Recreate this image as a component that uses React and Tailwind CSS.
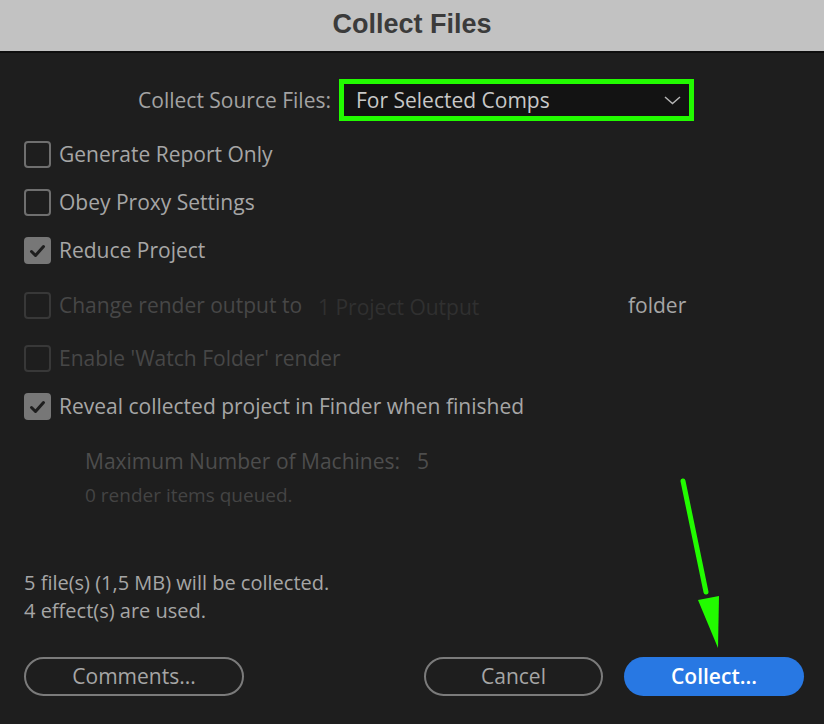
import React from "react";

const font = { fontFamily: '"Open Sans", "Noto Sans", sans-serif' };

function Check({ state }) {
  if (state === "on") {
    return (
      <div className="w-[27px] h-[27px] rounded-[4px] bg-[#777777] flex items-center justify-center shrink-0">
        <svg width="17" height="14" viewBox="0 0 17 14">
          <path d="M2.5 7.5 L6.5 11.5 L14.5 2.5" fill="none" stroke="#1e1e1e" strokeWidth="3" strokeLinecap="round" strokeLinejoin="round" />
        </svg>
      </div>
    );
  }
  return (
    <div
      className={
        "w-[27px] h-[27px] rounded-[4px] border-2 shrink-0 " +
        (state === "disabled" ? "border-[#383838]" : "border-[#6f6f6f]")
      }
    />
  );
}

function Row({ state, label, className, labelClass, children }) {
  return (
    <div className={"flex items-center h-[27px] " + (className || "")}>
      <Check state={state} />
      <span
        className={
          "ml-[8px] text-[21px] leading-none whitespace-nowrap " +
          (state === "disabled" ? "text-[#474747] " : "text-[#a6a6a6] ") +
          (labelClass || "")
        }
      >
        {label}
      </span>
      {children}
    </div>
  );
}

export default function App() {
  return (
    <div className="relative w-[824px] h-[724px] bg-[#1e1e1e] flex flex-col overflow-hidden" style={font}>
      <div className="h-[53px] shrink-0 bg-[#c2c2c2] border-b-2 border-[#0e0e0e] flex items-center justify-center">
        <span
          className="text-[27px] font-bold text-[#3b3b3b] leading-none -mt-[2px]"
          style={{ fontFamily: '"Liberation Sans", Arial, sans-serif' }}
        >
          Collect Files
        </span>
      </div>

      <div className="flex flex-col pl-[24px] pr-[20px] flex-1">
        <div className="flex items-center mt-[26px] h-[42px]">
          <div className="w-[307px] text-right text-[21px] text-[#a3a3a3] leading-none whitespace-nowrap">
            Collect Source Files:
          </div>
          <div className="ml-[8px] w-[355px] h-[42px] border-[5px] border-[#22fb00] bg-[#131313] flex items-center justify-between pl-[12px] pr-[8px]">
            <span className="text-[21px] text-[#c8c8c8] leading-none">For Selected Comps</span>
            <svg width="17" height="9" viewBox="0 0 17 9">
              <path d="M1 1 L8.5 7.5 L16 1" fill="none" stroke="#b5b5b5" strokeWidth="1.5" />
            </svg>
          </div>
        </div>

        <Row state="off" label="Generate Report Only" className="mt-[20px]" />
        <Row state="off" label="Obey Proxy Settings" className="mt-[21px]" />
        <Row state="on" label="Reduce Project" className="mt-[21px]" />
        <Row state="disabled" label="Change render output to" className="mt-[28px]" labelClass="w-[251px]">
          <span className="ml-[8px] w-[310px] text-[21px] leading-none text-[#303030] pt-[3px] whitespace-nowrap">1 Project Output</span>
          <span className="text-[21px] leading-none text-[#a6a6a6]">folder</span>
        </Row>
        <Row state="disabled" label="Enable 'Watch Folder' render" className="mt-[26px]" />
        <Row state="on" label="Reveal collected project in Finder when finished" className="mt-[21px]" />

        <div className="ml-[61px] mt-[27px] h-[28px] flex items-center text-[21px] text-[#4d4d4d] leading-none">
          <span>Maximum Number of Machines:</span>
          <span className="ml-[17px]">5</span>
        </div>
        <div className="ml-[61px] mt-[6px] h-[28px] flex items-center text-[19px] text-[#444444] leading-none">
          0 render items queued.
        </div>

        <div className="mt-[60px] h-[28px] flex items-center text-[20px] text-[#a6a6a6] leading-none">
          5 file(s) (1,5 MB) will be collected.
        </div>
        <div className="h-[28px] flex items-center text-[20px] text-[#a6a6a6] leading-none">
          4 effect(s) are used.
        </div>

        <div className="mt-[32px] flex items-center">
          <button className="w-[220px] h-[39px] rounded-full border-2 border-[#7b7b7b] text-[21px] text-[#a6a6a6] leading-none flex items-center justify-center">
            Comments...
          </button>
          <div className="flex-1" />
          <button className="w-[179px] h-[39px] rounded-full border-2 border-[#7b7b7b] text-[21px] text-[#a6a6a6] leading-none flex items-center justify-center">
            Cancel
          </button>
          <button className="ml-[21px] w-[180px] h-[39px] rounded-full bg-[#2878e3] text-[21px] font-semibold text-white leading-none flex items-center justify-center">
            Collect...
          </button>
        </div>
      </div>

      <svg className="absolute left-0 top-0 pointer-events-none" width="824" height="724" viewBox="0 0 824 724">
        <line x1="683" y1="481" x2="706" y2="592" stroke="#22fb00" strokeWidth="5" strokeLinecap="round" />
        <polygon points="698,600 719,596 718,648" fill="#22fb00" />
      </svg>
    </div>
  );
}
